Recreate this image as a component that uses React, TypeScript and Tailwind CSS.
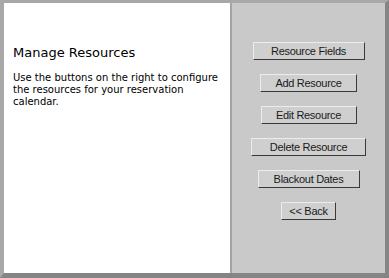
import React from "react";

const buttons = [
  { label: "Resource Fields", w: "w-[112px]" },
  { label: "Add Resource", w: "w-[97px]" },
  { label: "Edit Resource", w: "w-[96px]" },
  { label: "Delete Resource", w: "w-[115px]" },
  { label: "Blackout Dates", w: "w-[102px]" },
  { label: "<< Back", w: "w-[55px]" },
];

const App = () => {
  return (
    <div className="w-[389px] h-[278px] flex bg-white border-t-[3px] border-l-[4px] border-t-[#a8a8a8] border-l-[#a8a8a8] border-r-[4px] border-b-[5px] border-r-[#858585] border-b-[#858585]">
      {/* Left: description */}
      <div
        className="w-[226px] pl-[9px] pt-[42px] text-black"
        style={{ fontFamily: "'DejaVu Sans', Verdana, sans-serif" }}>
        <h1 className="text-[13px] leading-[16px] font-normal">Manage Resources</h1>
        <p className="mt-[11px] text-[10px] leading-[12px]">
          Use the buttons on the right to configure
          <br />
          the resources for your reservation
          <br />
          calendar.
        </p>
      </div>

      {/* Right: action buttons */}
      <div className="flex-1 bg-[#c9c9c9] border-l-2 border-l-[#a4a4a4] flex flex-col items-center pt-[39px] gap-[14px]">
        {buttons.map((b) => (
          <button
            key={b.label}
            className={`${b.w} h-[18px] bg-[#cfcfcf] border border-t-[#ececec] border-l-[#ececec] border-r-[#3a3a3a] border-b-[#3a3a3a] text-[11px] leading-none tracking-[-0.3px] text-[#1a1a1a] flex items-center justify-center`}
            style={{ fontFamily: "'Liberation Sans', Arial, sans-serif" }}>
            {b.label}
          </button>
        ))}
      </div>
    </div>
  );
};

export default App;
